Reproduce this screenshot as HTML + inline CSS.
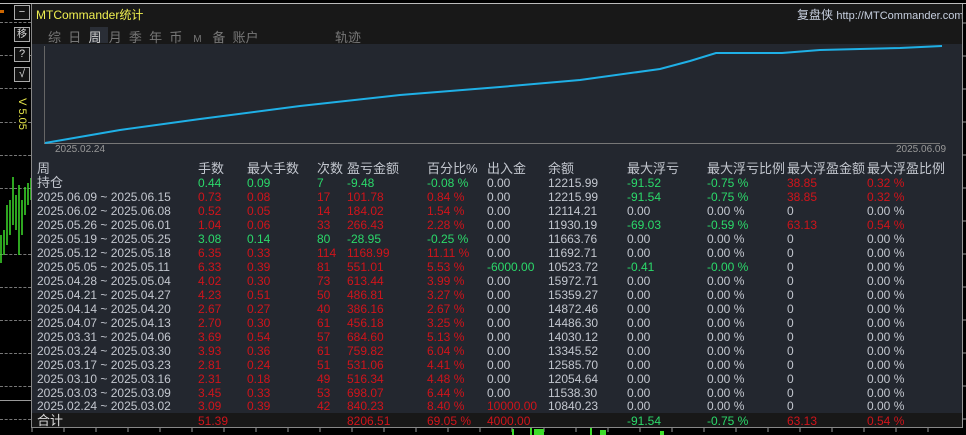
<!DOCTYPE html>
<html><head><meta charset="utf-8"><style>
*{margin:0;padding:0;box-sizing:border-box}
body{width:966px;height:435px;background:#000;position:relative;overflow:hidden;font-family:"Liberation Sans","Noto Sans CJK SC",sans-serif;font-size:12px;color:#c3c7cf}
.a{position:absolute;white-space:nowrap}
.dash{position:absolute;left:0;width:31px;border-top:1px dashed #777}
.btn{position:absolute;left:14px;width:16px;height:15px;border:1px solid #aaa;color:#ddd;font-size:11px;text-align:center;line-height:13px;background:#111}
.r{color:#d0141b}.g{color:#2bd96a}
.row{position:absolute;left:37px;height:14px;line-height:14px;width:920px}
.row span{position:absolute;top:0;white-space:nowrap}
</style></head><body>
<div class="a" style="left:0;top:3px;width:966px;height:1px;background:#bbb"></div>
<div class="dash" style="top:22px"></div><div class="dash" style="top:55px"></div><div class="dash" style="top:88px"></div><div class="dash" style="top:122px"></div><div class="dash" style="top:155px"></div><div class="dash" style="top:188px"></div><div class="dash" style="top:254px"></div><div class="dash" style="top:287px"></div><div class="dash" style="top:320px"></div><div class="dash" style="top:353px"></div><div class="dash" style="top:386px"></div><div class="dash" style="top:419px"></div>
<div class="a" style="left:0;top:400px;width:31px;height:1px;background:#999"></div>
<div class="a" style="left:0;top:10px;width:4px;height:3px;background:#c60"></div>
<svg class="a" style="left:0;top:175px" width="32" height="90"><g stroke="#3ddc2a" stroke-width="1.5">
<line x1="1" y1="60" x2="1" y2="88"/><line x1="4" y1="55" x2="4" y2="80"/><line x1="7" y1="30" x2="7" y2="70"/><line x1="10" y1="25" x2="10" y2="60"/><line x1="13" y1="2" x2="13" y2="50"/><line x1="16" y1="20" x2="16" y2="55"/><line x1="19" y1="10" x2="19" y2="80"/><line x1="22" y1="25" x2="22" y2="60"/><line x1="25" y1="12" x2="25" y2="40"/><line x1="28" y1="8" x2="28" y2="30"/><line x1="31" y1="3" x2="31" y2="25"/></g></svg>
<div class="btn" style="top:5px">−</div>
<div class="btn" style="top:27px;font-size:10px">移</div>
<div class="btn" style="top:47px">?</div>
<div class="btn" style="top:67px">√</div>
<div class="a" style="left:5px;top:108px;width:34px;height:12px;line-height:12px;text-align:center;transform:rotate(90deg);color:#e6e64a;font-size:11px;background:#000">V 5.05</div>
<!-- panel -->
<div class="a" style="left:31px;top:4px;width:931px;height:424px;background:#23272f;border-left:1px solid #888;border-bottom:1px solid #888"></div>
<div class="a" style="left:32px;top:4px;width:930px;height:40px;background:#181818"></div>
<div class="a" style="left:36px;top:6px;color:#f0f050;font-size:12px">MTCommander统计</div>
<div class="a" style="left:797px;top:6px;color:#c8d0e0;font-size:12px">复盘侠 <span style="font-size:11px">http://MTCommander.com</span></div>
<div class="a" style="left:90px;top:27px;width:18px;height:16px;background:#2a2e36"></div>
<div class="a" style="left:48px;top:27px;color:#777;font-size:13px;word-spacing:0">综&nbsp;&nbsp;日&nbsp;&nbsp;<span style="color:#ccc">周</span>&nbsp;&nbsp;月&nbsp;&nbsp;季&nbsp;&nbsp;年&nbsp;&nbsp;币&nbsp;&nbsp;&nbsp;<span style="font-size:10px">M</span>&nbsp;&nbsp;&nbsp;备&nbsp;&nbsp;账户</div>
<div class="a" style="left:335px;top:27px;color:#777;font-size:13px">轨迹</div>
<div class="a" style="left:962px;top:4px;width:1px;height:424px;background:#999"></div>
<svg class="a" style="left:0;top:0" width="966" height="435">
<line x1="44.5" y1="46" x2="44.5" y2="144" stroke="#666"/>
<line x1="44" y1="143.5" x2="940" y2="143.5" stroke="#777"/>
<polyline fill="none" stroke="#1fb0e6" stroke-width="2" points="45,143 120,130 200,119 300,106 400,95 500,87 580,80 660,69 690,61 716,53 782,53 820,50 900,48 942,46"/>
<g stroke="#999">
<line x1="962" y1="23" x2="966" y2="23"/><line x1="962" y1="56" x2="966" y2="56"/><line x1="962" y1="89" x2="966" y2="89"/><line x1="962" y1="122" x2="966" y2="122"/><line x1="962" y1="155" x2="966" y2="155"/><line x1="962" y1="188" x2="966" y2="188"/><line x1="962" y1="221" x2="966" y2="221"/><line x1="962" y1="254" x2="966" y2="254"/><line x1="962" y1="287" x2="966" y2="287"/><line x1="962" y1="320" x2="966" y2="320"/><line x1="962" y1="353" x2="966" y2="353"/><line x1="962" y1="386" x2="966" y2="386"/><line x1="962" y1="419" x2="966" y2="419"/>
</g>
<g stroke="#999"><line x1="32" y1="428" x2="32" y2="432"/><line x1="64" y1="428" x2="64" y2="432"/><line x1="96" y1="428" x2="96" y2="432"/><line x1="128" y1="428" x2="128" y2="432"/><line x1="160" y1="428" x2="160" y2="432"/><line x1="192" y1="428" x2="192" y2="432"/><line x1="224" y1="428" x2="224" y2="432"/><line x1="256" y1="428" x2="256" y2="432"/><line x1="288" y1="428" x2="288" y2="432"/><line x1="320" y1="428" x2="320" y2="432"/><line x1="352" y1="428" x2="352" y2="432"/><line x1="384" y1="428" x2="384" y2="432"/><line x1="416" y1="428" x2="416" y2="432"/><line x1="448" y1="428" x2="448" y2="432"/><line x1="480" y1="428" x2="480" y2="432"/><line x1="512" y1="428" x2="512" y2="432"/><line x1="544" y1="428" x2="544" y2="432"/><line x1="576" y1="428" x2="576" y2="432"/><line x1="608" y1="428" x2="608" y2="432"/><line x1="640" y1="428" x2="640" y2="432"/><line x1="672" y1="428" x2="672" y2="432"/><line x1="704" y1="428" x2="704" y2="432"/><line x1="736" y1="428" x2="736" y2="432"/><line x1="768" y1="428" x2="768" y2="432"/><line x1="800" y1="428" x2="800" y2="432"/><line x1="832" y1="428" x2="832" y2="432"/><line x1="864" y1="428" x2="864" y2="432"/><line x1="896" y1="428" x2="896" y2="432"/><line x1="928" y1="428" x2="928" y2="432"/></g>
<g fill="#3ddc2a"><rect x="512" y="429" width="2" height="6"/><rect x="530" y="428" width="2" height="7"/><rect x="534" y="429" width="10" height="6"/><rect x="590" y="428" width="2" height="7"/><rect x="600" y="430" width="6" height="5"/><rect x="660" y="431" width="4" height="4"/></g>
</svg>
<div class="a" style="left:55px;top:144px;color:#999;font-size:10px">2025.02.24</div>
<div class="a" style="left:896px;top:144px;color:#999;font-size:10px">2025.06.09</div>
<div class="a" style="left:32px;top:413px;width:930px;height:14px;background:#181818"></div>
<div class="row" style="top:162px;font-size:13px"><span style="left:0">周</span><span style="left:161px">手数</span><span style="left:210px">最大手数</span><span style="left:280px">次数</span><span style="left:310px">盈亏金额</span><span style="left:390px">百分比%</span><span style="left:450px">出入金</span><span style="left:511px">余额</span><span style="left:590px">最大浮亏</span><span style="left:670px">最大浮亏比例</span><span style="left:750px">最大浮盈金额</span><span style="left:830px">最大浮盈比例</span></div>
<div class="row" style="top:176px;font-size:13px"><span style="left:0">持仓</span><span class="g" style="left:161px;font-size:12px">0.44</span><span class="g" style="left:210px;font-size:12px">0.09</span><span class="g" style="left:280px;font-size:12px">7</span><span class="g" style="left:310px;font-size:12px">-9.48</span><span class="g" style="left:390px;font-size:12px">-0.08 %</span><span style="left:450px;font-size:12px">0.00</span><span style="left:511px;font-size:12px">12215.99</span><span class="g" style="left:590px;font-size:12px">-91.52</span><span class="g" style="left:670px;font-size:12px">-0.75 %</span><span class="r" style="left:750px;font-size:12px">38.85</span><span class="r" style="left:830px;font-size:12px">0.32 %</span></div>
<div class="row" style="top:190px"><span style="left:0">2025.06.09 ~ 2025.06.15</span><span class="r" style="left:161px">0.73</span><span class="r" style="left:210px">0.08</span><span class="r" style="left:280px">17</span><span class="r" style="left:310px">101.78</span><span class="r" style="left:390px">0.84 %</span><span style="left:450px">0.00</span><span style="left:511px">12215.99</span><span class="g" style="left:590px">-91.54</span><span class="g" style="left:670px">-0.75 %</span><span class="r" style="left:750px">38.85</span><span class="r" style="left:830px">0.32 %</span></div>
<div class="row" style="top:204px"><span style="left:0">2025.06.02 ~ 2025.06.08</span><span class="r" style="left:161px">0.52</span><span class="r" style="left:210px">0.05</span><span class="r" style="left:280px">14</span><span class="r" style="left:310px">184.02</span><span class="r" style="left:390px">1.54 %</span><span style="left:450px">0.00</span><span style="left:511px">12114.21</span><span style="left:590px">0.00</span><span style="left:670px">0.00 %</span><span style="left:750px">0</span><span style="left:830px">0.00 %</span></div>
<div class="row" style="top:218px"><span style="left:0">2025.05.26 ~ 2025.06.01</span><span class="r" style="left:161px">1.04</span><span class="r" style="left:210px">0.06</span><span class="r" style="left:280px">33</span><span class="r" style="left:310px">266.43</span><span class="r" style="left:390px">2.28 %</span><span style="left:450px">0.00</span><span style="left:511px">11930.19</span><span class="g" style="left:590px">-69.03</span><span class="g" style="left:670px">-0.59 %</span><span class="r" style="left:750px">63.13</span><span class="r" style="left:830px">0.54 %</span></div>
<div class="row" style="top:232px"><span style="left:0">2025.05.19 ~ 2025.05.25</span><span class="g" style="left:161px">3.08</span><span class="g" style="left:210px">0.14</span><span class="g" style="left:280px">80</span><span class="g" style="left:310px">-28.95</span><span class="g" style="left:390px">-0.25 %</span><span style="left:450px">0.00</span><span style="left:511px">11663.76</span><span style="left:590px">0.00</span><span style="left:670px">0.00 %</span><span style="left:750px">0</span><span style="left:830px">0.00 %</span></div>
<div class="row" style="top:246px"><span style="left:0">2025.05.12 ~ 2025.05.18</span><span class="r" style="left:161px">6.35</span><span class="r" style="left:210px">0.33</span><span class="r" style="left:280px">114</span><span class="r" style="left:310px">1168.99</span><span class="r" style="left:390px">11.11 %</span><span style="left:450px">0.00</span><span style="left:511px">11692.71</span><span style="left:590px">0.00</span><span style="left:670px">0.00 %</span><span style="left:750px">0</span><span style="left:830px">0.00 %</span></div>
<div class="row" style="top:260px"><span style="left:0">2025.05.05 ~ 2025.05.11</span><span class="r" style="left:161px">6.33</span><span class="r" style="left:210px">0.39</span><span class="r" style="left:280px">81</span><span class="r" style="left:310px">551.01</span><span class="r" style="left:390px">5.53 %</span><span class="g" style="left:450px">-6000.00</span><span style="left:511px">10523.72</span><span class="g" style="left:590px">-0.41</span><span class="g" style="left:670px">-0.00 %</span><span style="left:750px">0</span><span style="left:830px">0.00 %</span></div>
<div class="row" style="top:274px"><span style="left:0">2025.04.28 ~ 2025.05.04</span><span class="r" style="left:161px">4.02</span><span class="r" style="left:210px">0.30</span><span class="r" style="left:280px">73</span><span class="r" style="left:310px">613.44</span><span class="r" style="left:390px">3.99 %</span><span style="left:450px">0.00</span><span style="left:511px">15972.71</span><span style="left:590px">0.00</span><span style="left:670px">0.00 %</span><span style="left:750px">0</span><span style="left:830px">0.00 %</span></div>
<div class="row" style="top:288px"><span style="left:0">2025.04.21 ~ 2025.04.27</span><span class="r" style="left:161px">4.23</span><span class="r" style="left:210px">0.51</span><span class="r" style="left:280px">50</span><span class="r" style="left:310px">486.81</span><span class="r" style="left:390px">3.27 %</span><span style="left:450px">0.00</span><span style="left:511px">15359.27</span><span style="left:590px">0.00</span><span style="left:670px">0.00 %</span><span style="left:750px">0</span><span style="left:830px">0.00 %</span></div>
<div class="row" style="top:302px"><span style="left:0">2025.04.14 ~ 2025.04.20</span><span class="r" style="left:161px">2.67</span><span class="r" style="left:210px">0.27</span><span class="r" style="left:280px">40</span><span class="r" style="left:310px">386.16</span><span class="r" style="left:390px">2.67 %</span><span style="left:450px">0.00</span><span style="left:511px">14872.46</span><span style="left:590px">0.00</span><span style="left:670px">0.00 %</span><span style="left:750px">0</span><span style="left:830px">0.00 %</span></div>
<div class="row" style="top:316px"><span style="left:0">2025.04.07 ~ 2025.04.13</span><span class="r" style="left:161px">2.70</span><span class="r" style="left:210px">0.30</span><span class="r" style="left:280px">61</span><span class="r" style="left:310px">456.18</span><span class="r" style="left:390px">3.25 %</span><span style="left:450px">0.00</span><span style="left:511px">14486.30</span><span style="left:590px">0.00</span><span style="left:670px">0.00 %</span><span style="left:750px">0</span><span style="left:830px">0.00 %</span></div>
<div class="row" style="top:330px"><span style="left:0">2025.03.31 ~ 2025.04.06</span><span class="r" style="left:161px">3.69</span><span class="r" style="left:210px">0.54</span><span class="r" style="left:280px">57</span><span class="r" style="left:310px">684.60</span><span class="r" style="left:390px">5.13 %</span><span style="left:450px">0.00</span><span style="left:511px">14030.12</span><span style="left:590px">0.00</span><span style="left:670px">0.00 %</span><span style="left:750px">0</span><span style="left:830px">0.00 %</span></div>
<div class="row" style="top:344px"><span style="left:0">2025.03.24 ~ 2025.03.30</span><span class="r" style="left:161px">3.93</span><span class="r" style="left:210px">0.36</span><span class="r" style="left:280px">61</span><span class="r" style="left:310px">759.82</span><span class="r" style="left:390px">6.04 %</span><span style="left:450px">0.00</span><span style="left:511px">13345.52</span><span style="left:590px">0.00</span><span style="left:670px">0.00 %</span><span style="left:750px">0</span><span style="left:830px">0.00 %</span></div>
<div class="row" style="top:358px"><span style="left:0">2025.03.17 ~ 2025.03.23</span><span class="r" style="left:161px">2.81</span><span class="r" style="left:210px">0.24</span><span class="r" style="left:280px">51</span><span class="r" style="left:310px">531.06</span><span class="r" style="left:390px">4.41 %</span><span style="left:450px">0.00</span><span style="left:511px">12585.70</span><span style="left:590px">0.00</span><span style="left:670px">0.00 %</span><span style="left:750px">0</span><span style="left:830px">0.00 %</span></div>
<div class="row" style="top:372px"><span style="left:0">2025.03.10 ~ 2025.03.16</span><span class="r" style="left:161px">2.31</span><span class="r" style="left:210px">0.18</span><span class="r" style="left:280px">49</span><span class="r" style="left:310px">516.34</span><span class="r" style="left:390px">4.48 %</span><span style="left:450px">0.00</span><span style="left:511px">12054.64</span><span style="left:590px">0.00</span><span style="left:670px">0.00 %</span><span style="left:750px">0</span><span style="left:830px">0.00 %</span></div>
<div class="row" style="top:386px"><span style="left:0">2025.03.03 ~ 2025.03.09</span><span class="r" style="left:161px">3.45</span><span class="r" style="left:210px">0.33</span><span class="r" style="left:280px">53</span><span class="r" style="left:310px">698.07</span><span class="r" style="left:390px">6.44 %</span><span style="left:450px">0.00</span><span style="left:511px">11538.30</span><span style="left:590px">0.00</span><span style="left:670px">0.00 %</span><span style="left:750px">0</span><span style="left:830px">0.00 %</span></div>
<div class="row" style="top:399px"><span style="left:0">2025.02.24 ~ 2025.03.02</span><span class="r" style="left:161px">3.09</span><span class="r" style="left:210px">0.39</span><span class="r" style="left:280px">42</span><span class="r" style="left:310px">840.23</span><span class="r" style="left:390px">8.40 %</span><span class="r" style="left:450px">10000.00</span><span style="left:511px">10840.23</span><span style="left:590px">0.00</span><span style="left:670px">0.00 %</span><span style="left:750px">0</span><span style="left:830px">0.00 %</span></div>
<div class="row" style="top:414px"><span style="left:0;font-size:13px;color:#ddd">合计</span><span class="r" style="left:161px">51.39</span><span class="r" style="left:310px">8206.51</span><span class="r" style="left:390px">69.05 %</span><span class="r" style="left:450px">4000.00</span><span class="g" style="left:590px">-91.54</span><span class="g" style="left:670px">-0.75 %</span><span class="r" style="left:750px">63.13</span><span class="r" style="left:830px">0.54 %</span></div>
</body></html>
